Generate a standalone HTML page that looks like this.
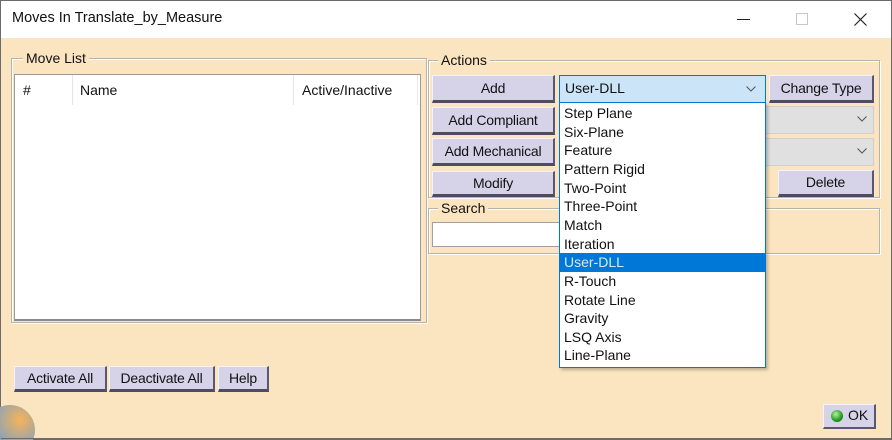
<!DOCTYPE html>
<html><head><style>
*{box-sizing:border-box;margin:0;padding:0}
html,body{width:892px;height:440px;overflow:hidden}
body{background:#fbe5c1;font-family:"Liberation Sans",sans-serif;font-size:14px;color:#111}
#r{position:relative;width:892px;height:440px;overflow:hidden}
.a{position:absolute}
.win{left:0;top:0;width:892px;height:440px;border:1px solid #6b6b6b}
.title{left:1px;top:1px;width:890px;height:37px;background:#fff}
.fs{border:1px solid #b8b2a8;box-shadow:inset 1px 1px 0 #fff,1px 1px 0 #fff}
.lg{background:#fbe5c1;padding:0 3px;font-size:14px;line-height:16px}
.btn{background:#d6d3e9;border:1px solid #f4f3fb;border-right:2px solid #5a5870;border-bottom:3px solid #4e4c63;text-align:center;line-height:24px;font-size:14px;letter-spacing:-0.2px}
.cb{background:#e0e0e0;border:1px solid #cfcfcf}
.it{position:absolute;left:2px;height:18.65px;line-height:18.65px;width:202px;padding-left:2px}
</style></head><body><div id="r">
<div class="a win"></div>
<div class="a title"></div>
<div class="a" style="left:12px;top:10px;font-size:14.5px">Moves In Translate_by_Measure</div>
<div class="a" style="left:737px;top:19px;width:13px;height:1px;background:#222"></div>
<div class="a" style="left:796px;top:13px;width:12px;height:12px;border:1px solid #c8c8c8"></div>
<svg class="a" style="left:854px;top:13px" width="13" height="13"><path d="M0.5 0.5L12.5 12.5M12.5 0.5L0.5 12.5" stroke="#222" stroke-width="1.2"/></svg>

<div class="a fs" style="left:11px;top:58px;width:416px;height:265px"></div>
<div class="a lg" style="left:23px;top:50px">Move List</div>
<div class="a" style="left:14px;top:74px;width:407px;height:247px;background:#fff;border:1px solid #9a9a9a;border-bottom:2px solid #8a8a8a"></div>
<div class="a" style="left:23px;top:82px">#</div>
<div class="a" style="left:72px;top:75px;width:1px;height:30px;background:#e6e6e6"></div>
<div class="a" style="left:80px;top:82px">Name</div>
<div class="a" style="left:293px;top:75px;width:1px;height:30px;background:#e6e6e6"></div>
<div class="a" style="left:302px;top:82px">Active/Inactive</div>
<div class="a" style="left:417px;top:75px;width:1px;height:30px;background:#e6e6e6"></div>

<div class="a fs" style="left:428px;top:60px;width:452px;height:138px"></div>
<div class="a lg" style="left:438px;top:52px">Actions</div>
<div class="a btn" style="left:432px;top:75px;width:123px;height:28px">Add</div>
<div class="a btn" style="left:432px;top:107px;width:123px;height:28px">Add Compliant</div>
<div class="a btn" style="left:432px;top:138px;width:123px;height:28px">Add Mechanical</div>
<div class="a btn" style="left:432px;top:171px;width:123px;height:26px;line-height:22px">Modify</div>
<div class="a btn" style="left:769px;top:75px;width:105px;height:28px">Change Type</div>
<div class="a cb" style="left:700px;top:106px;width:174px;height:28px"></div>
<div class="a cb" style="left:700px;top:138px;width:174px;height:28px"></div>
<svg class="a" style="left:857px;top:116px" width="10" height="6"><path d="M0.5 0.5L5 5L9.5 0.5" fill="none" stroke="#555"/></svg>
<svg class="a" style="left:857px;top:148px" width="10" height="6"><path d="M0.5 0.5L5 5L9.5 0.5" fill="none" stroke="#555"/></svg>
<div class="a btn" style="left:778px;top:170px;width:96px;height:27px;line-height:23px">Delete</div>

<div class="a fs" style="left:428px;top:208px;width:452px;height:46px"></div>
<div class="a lg" style="left:438px;top:200px">Search</div>
<div class="a" style="left:432px;top:222px;width:140px;height:25px;background:#fff;border:1px solid #a0a0a0"></div>

<div class="a" style="left:559px;top:75px;width:207px;height:28px;background:#cce4f7;border:1px solid #0078d7"></div>
<div class="a" style="left:565px;top:80px">User-DLL</div>
<svg class="a" style="left:746px;top:86px" width="10" height="6"><path d="M0.5 0.5L5 5L9.5 0.5" fill="none" stroke="#555"/></svg>
<div class="a" style="left:559px;top:102px;width:207px;height:266px;background:#fff;border:1px solid #0078d7;box-shadow:2px 2px 3px rgba(0,0,0,.25)">
<div class="it" style="top:1px">Step Plane</div>
<div class="it" style="top:19.65px">Six-Plane</div>
<div class="it" style="top:38.3px">Feature</div>
<div class="it" style="top:56.95px">Pattern Rigid</div>
<div class="it" style="top:75.6px">Two-Point</div>
<div class="it" style="top:94.25px">Three-Point</div>
<div class="it" style="top:112.9px">Match</div>
<div class="it" style="top:131.55px">Iteration</div>
<div class="it" style="top:150.2px;left:0;width:205px;padding-left:4px;background:#0078d7;color:#d8e8f8">User-DLL</div>
<div class="it" style="top:168.85px">R-Touch</div>
<div class="it" style="top:187.5px">Rotate Line</div>
<div class="it" style="top:206.15px">Gravity</div>
<div class="it" style="top:224.8px">LSQ Axis</div>
<div class="it" style="top:243.45px">Line-Plane</div>
</div>

<div class="a btn" style="left:14px;top:366px;width:93px;height:26px;line-height:22px">Activate All</div>
<div class="a btn" style="left:109px;top:366px;width:106px;height:26px;line-height:22px">Deactivate All</div>
<div class="a btn" style="left:218px;top:366px;width:51px;height:26px;line-height:22px">Help</div>

<div class="a" style="left:-15px;top:405px;width:50px;height:50px;border-radius:50%;background:radial-gradient(circle at 70% 30%,#f6b35a,#8aa3b8 55%,#fbe5c1 72%)"></div>
<div class="a" style="left:1px;top:438px;width:890px;height:1px;background:#6b6b6b"></div>
<div class="a" style="left:823px;top:404px;width:53px;height:25px;background:#d6d3e9;border:1px solid #f4f3fb;border-right:2px solid #5a5870;border-bottom:2px solid #5a5870"></div>
<div class="a" style="left:831px;top:410px;width:12px;height:12px;border-radius:50%;background:radial-gradient(circle at 40% 35%,#b8f0a0,#1d9a1d 60%,#0d5a0d)"></div>
<div class="a" style="left:848px;top:407px">OK</div>
</div></body></html>
